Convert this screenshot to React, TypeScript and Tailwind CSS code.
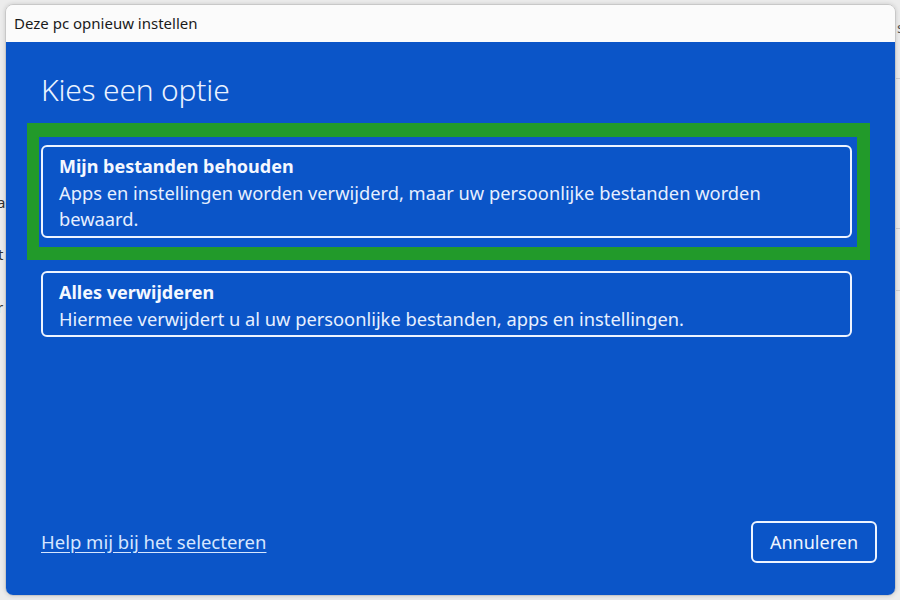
import React from "react";

export default function App() {
  return (
    <div
      className="relative w-[900px] h-[600px] overflow-hidden bg-[#ececec]"
      style={{ fontFamily: '"Noto Sans", "Open Sans", Arial, sans-serif' }}
    >
      {/* background fragments */}
      <span className="absolute left-[-3px] top-[191px] text-[15px] text-[#333]">a</span>
      <span className="absolute left-[-2px] top-[243px] text-[15px] text-[#333]">t</span>
      <span className="absolute left-[-3px] top-[296px] text-[15px] text-[#333]">r</span>
      <span className="absolute left-[897px] top-[16px] text-[15px] text-[#555]">s</span>
      <div className="absolute left-[896px] top-[78px] w-[4px] h-px bg-[#cfcfcf]" />
      <div className="absolute left-[896px] top-[228px] w-[4px] h-px bg-[#cfcfcf]" />
      <div className="absolute left-[896px] top-[290px] w-[4px] h-px bg-[#cfcfcf]" />

      <div className="relative ml-[5px] mt-[4px] w-[891px] h-[592px] rounded-[8px] overflow-hidden flex flex-col border border-[#c8c8c8] shadow-[0_0_4px_rgba(0,0,0,0.15)]">
        <div className="h-[37px] bg-[#fbfbfb] flex items-center pl-[8px] shrink-0">
          <span className="text-[15px] text-[#1a1a1a]">Deze pc opnieuw instellen</span>
        </div>
        <div className="flex-1 bg-[#0b55c8] flex flex-col px-[35px] text-white">
          <h1 className="mt-[28px] text-[30px] font-light leading-[40px] text-[#eaf2ff] tracking-[-0.2px]">
            Kies een optie
          </h1>

          <div className="relative mt-[35px] mr-[8px] rounded-[6px] border-2 border-[#eef4ff] pl-[16px] pr-[12px] pt-[6px] pb-[4px]">
            <div className="absolute left-[-16px] top-[-24px] right-[-20px] bottom-[-24px] border-[#229a2a] border-l-[12px] border-t-[14px] border-r-[13px] border-b-[13px] pointer-events-none" />
            <div className="text-[18px] font-bold leading-[27px] text-[#f4f8ff]">Mijn bestanden behouden</div>
            <div className="text-[18.3px] leading-[26px] text-[#e6efff] whitespace-nowrap">
              Apps en instellingen worden verwijderd, maar uw persoonlijke bestanden worden
              <br />
              bewaard.
            </div>
          </div>

          <div className="mt-[33px] mr-[8px] rounded-[6px] border-2 border-[#eef4ff] pl-[16px] pr-[12px] pt-[6px] pb-[3px]">
            <div className="text-[18px] font-bold leading-[27px] text-[#f4f8ff]">Alles verwijderen</div>
            <div className="text-[18.3px] leading-[26px] text-[#e6efff]">
              Hiermee verwijdert u al uw persoonlijke bestanden, apps en instellingen.
            </div>
          </div>

          <div className="mt-auto mb-[32px] flex items-center justify-between mr-[-17px]">
            <a className="text-[18.5px] underline underline-offset-[3px] text-[#d6e6ff]">
              Help mij bij het selecteren
            </a>
            <button className="w-[126px] h-[42px] rounded-[6px] border-2 border-[#eef4ff] text-[18px] text-[#eef4ff]">
              Annuleren
            </button>
          </div>
        </div>
      </div>
    </div>
  );
}
